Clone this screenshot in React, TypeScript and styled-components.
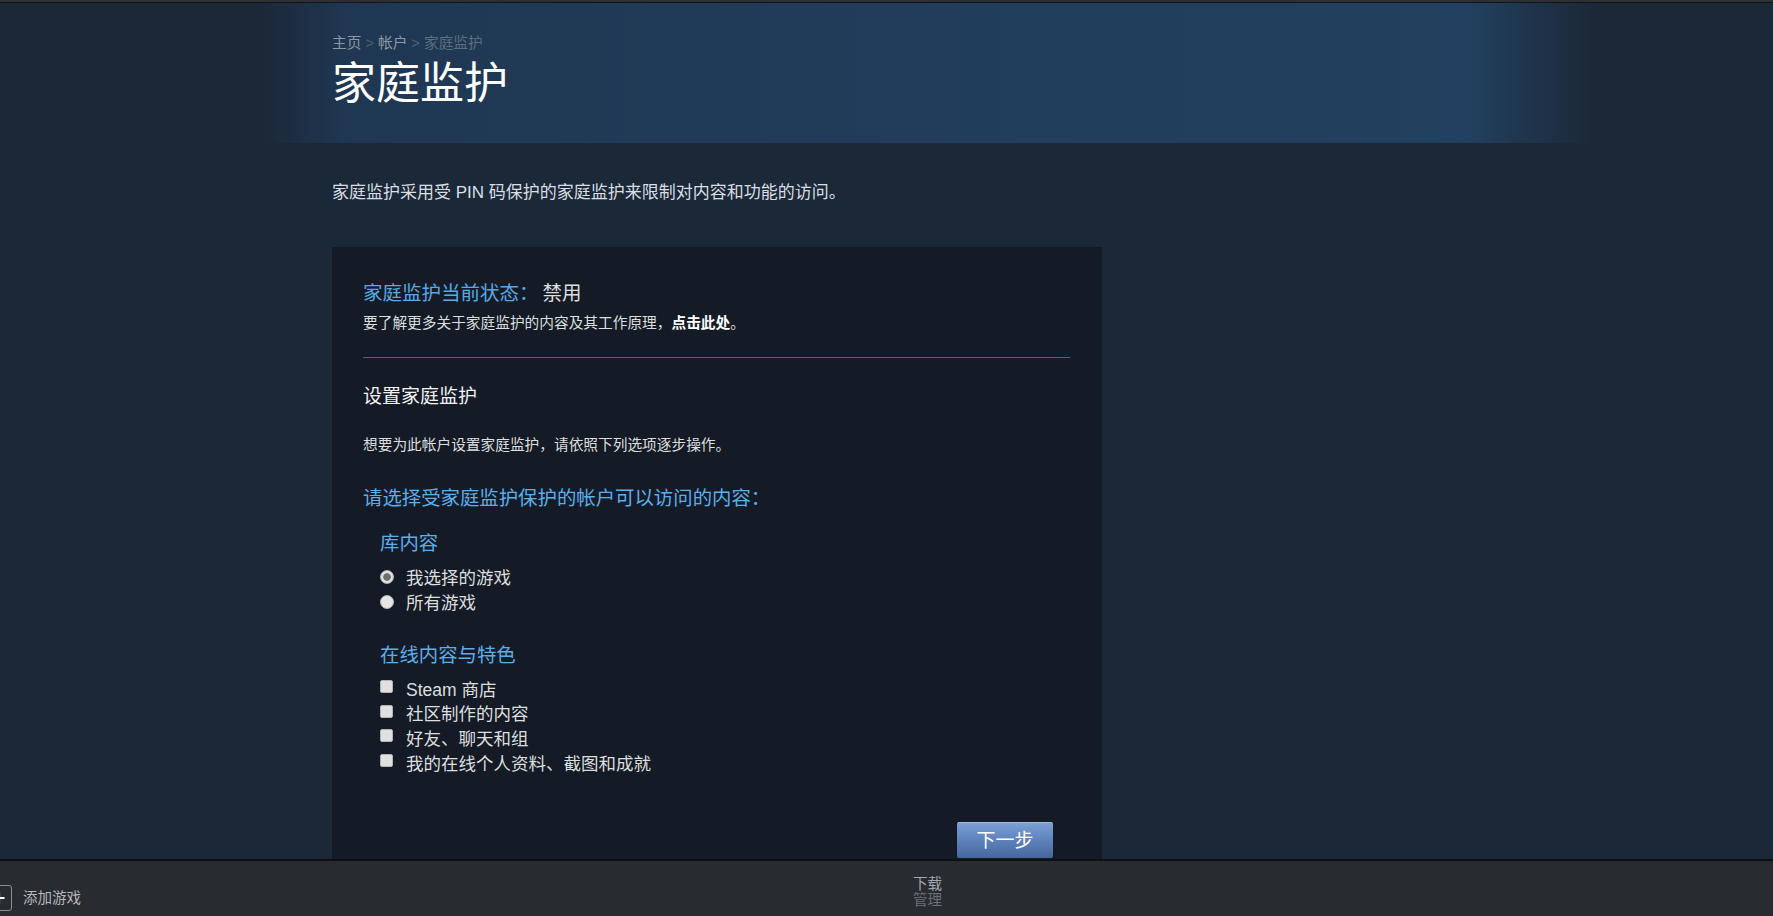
import React from 'react';
import styled, { createGlobalStyle } from 'styled-components';

const GlobalStyle = createGlobalStyle`
  html, body {
    margin: 0;
    padding: 0;
    height: 100%;
    overflow: hidden;
  }
  body {
    background: #1b2838;
    color: #d6dde3;
    font-family: "Liberation Sans", "Noto Sans CJK SC", Arial, sans-serif;
  }
`;

const TopBar = styled.div`
  height: 2px;
  background: #2c2f33;
  border-bottom: 1px solid #131518;
`;

const HeaderBand = styled.header`
  height: 140px;
  box-sizing: border-box;
  padding: 31px 0 0 332px;
  background: linear-gradient(
    90deg,
    rgba(31, 56, 83, 0) 262px,
    #1f3752 345px,
    #213d5b 900px,
    #22405f 1470px,
    rgba(34, 64, 95, 0) 1592px
  );
`;

const Breadcrumbs = styled.div`
  font-size: 14.7px;
  line-height: 18px;
  color: #8f98a0;
`;

const Sep = styled.span`
  color: #56626d;
  margin: 0 4px;
`;

const Current = styled.span`
  color: #5a6f80;
`;

const Title = styled.h1`
  margin: 6px 0 0;
  font-size: 44px;
  line-height: 52px;
  font-weight: 400;
  color: #ffffff;
`;

const Main = styled.main`
  padding-left: 332px;
`;

const Intro = styled.p`
  margin: 38px 0 0;
  font-size: 17px;
  line-height: 24px;
  color: #d8dee3;
`;

const Panel = styled.section`
  margin-top: 42px;
  width: 770px;
  box-sizing: border-box;
  padding: 34px 32px 40px 31px;
  background: #151b26;
`;

const Status = styled.div`
  font-size: 19.5px;
  line-height: 24px;
  color: #57a9e4;
`;

const StatusValue = styled.span`
  color: #dcdedf;
  margin-left: 4px;
`;

const Small = styled.p<{ $top: number }>`
  margin: ${(p) => p.$top}px 0 0;
  font-size: 14.7px;
  line-height: 20px;
  color: #dcdedf;
`;

const Link = styled.a`
  color: #ffffff;
  font-weight: 700;
  text-decoration: none;
  cursor: pointer;
`;

const Divider = styled.hr`
  margin: 24px 0 0;
  border: 0;
  height: 1px;
  background: #3b6a8a;
`;

const SectionTitle = styled.h2`
  margin: 27px 0 0;
  font-size: 19px;
  line-height: 24px;
  font-weight: 400;
  color: #f2f2f2;
`;

const Question = styled.h3`
  margin: 31px 0 0;
  font-size: 19.4px;
  line-height: 24px;
  font-weight: 400;
  color: #5aafea;
`;

const Group = styled.div`
  padding-left: 17px;
`;

const GroupTitle = styled.h4<{ $top: number }>`
  margin: ${(p) => p.$top}px 0 0;
  font-size: 19.4px;
  line-height: 24px;
  font-weight: 400;
  color: #5aafea;
`;

const OptionList = styled.div<{ $top: number }>`
  display: flex;
  flex-direction: column;
  margin-top: ${(p) => p.$top}px;
`;

const Option = styled.label<{ $h: number }>`
  display: flex;
  align-items: center;
  gap: 12px;
  height: ${(p) => p.$h}px;
  font-size: 17.5px;
  color: #dcdedf;
  cursor: pointer;
`;

const Radio = styled.input.attrs({ type: 'radio' })`
  appearance: none;
  margin: 0;
  width: 14px;
  height: 14px;
  border-radius: 50%;
  border: 1px solid #b4b4b4;
  background: #e6e6e6;
  flex-shrink: 0;

  &:checked {
    background: radial-gradient(circle, #6e6e6e 0 3.4px, #e2e2e2 4.2px);
  }
`;

const Checkbox = styled.input.attrs({ type: 'checkbox' })`
  appearance: none;
  margin: -3px 1px 0 0;
  width: 13px;
  height: 13px;
  border-radius: 2px;
  border: 1px solid #b2b2b2;
  background: #e0e0e0;
  flex-shrink: 0;
`;

const Actions = styled.div`
  display: flex;
  justify-content: flex-end;
  margin-top: 48px;
  padding-right: 17px;
`;

const NextButton = styled.button`
  width: 96px;
  height: 36px;
  border: 0;
  border-top: 1px solid #9cbce6;
  border-radius: 2px;
  background: linear-gradient(180deg, #7aa0d6 0%, #5a7fb8 55%, #47679c 100%);
  color: #ffffff;
  font-family: inherit;
  font-size: 19px;
  line-height: 36px;
  padding: 0 0 2px;
  cursor: pointer;
`;

const BottomBar = styled.footer`
  position: fixed;
  left: 0;
  right: 0;
  bottom: 0;
  height: 57px;
  box-sizing: border-box;
  border-top: 2px solid #0f1013;
  background: #282b30;
  display: flex;
  align-items: flex-start;
`;

const AddGame = styled.div`
  display: flex;
  align-items: center;
  gap: 11px;
  width: 927px;
  margin: 24px 0 0 -14px;
  flex-shrink: 0;
  font-size: 14.5px;
  line-height: 26px;
  color: #b4b7bb;
`;

const PlusBox = styled.span`
  width: 26px;
  height: 26px;
  box-sizing: border-box;
  border: 1.5px solid #8b8e93;
  border-radius: 3px;
  display: flex;
  align-items: center;
  justify-content: center;
`;

const Downloads = styled.div`
  margin-top: 15px;
  display: flex;
  flex-direction: column;
  font-size: 14.5px;
  line-height: 16px;
`;

const DownloadLine = styled.span<{ $dim?: boolean }>`
  color: ${(p) => (p.$dim ? '#6b6e73' : '#a3a6ab')};
`;

const libraryOptions = [
  { label: '我选择的游戏', checked: true },
  { label: '所有游戏', checked: false },
];

const onlineOptions = [
  'Steam 商店',
  '社区制作的内容',
  '好友、聊天和组',
  '我的在线个人资料、截图和成就',
];

export default function App() {
  return (
    <>
      <GlobalStyle />
      <TopBar />
      <HeaderBand>
        <Breadcrumbs>
          主页<Sep>&gt;</Sep>帐户<Sep>&gt;</Sep>
          <Current>家庭监护</Current>
        </Breadcrumbs>
        <Title>家庭监护</Title>
      </HeaderBand>
      <Main>
        <Intro>家庭监护采用受 PIN 码保护的家庭监护来限制对内容和功能的访问。</Intro>
        <Panel>
          <Status>
            家庭监护当前状态：<StatusValue>禁用</StatusValue>
          </Status>
          <Small $top={8}>
            要了解更多关于家庭监护的内容及其工作原理，<Link>点击此处</Link>。
          </Small>
          <Divider />
          <SectionTitle>设置家庭监护</SectionTitle>
          <Small $top={26}>想要为此帐户设置家庭监护，请依照下列选项逐步操作。</Small>
          <Question>请选择受家庭监护保护的帐户可以访问的内容：</Question>
          <Group>
            <GroupTitle $top={21}>库内容</GroupTitle>
            <OptionList $top={9}>
              {libraryOptions.map((o) => (
                <Option key={o.label} $h={25}>
                  <Radio name="library" defaultChecked={o.checked} />
                  {o.label}
                </Option>
              ))}
            </OptionList>
            <GroupTitle $top={29}>在线内容与特色</GroupTitle>
            <OptionList $top={9}>
              {onlineOptions.map((label) => (
                <Option key={label} $h={24.6}>
                  <Checkbox />
                  {label}
                </Option>
              ))}
            </OptionList>
          </Group>
          <Actions>
            <NextButton>下一步</NextButton>
          </Actions>
        </Panel>
      </Main>
      <BottomBar>
        <AddGame>
          <PlusBox>
            <svg width="14" height="14" viewBox="0 0 14 14">
              <path d="M7 1.5v11M1.5 7h11" stroke="#ffffff" strokeWidth="2.2" />
            </svg>
          </PlusBox>
          添加游戏
        </AddGame>
        <Downloads>
          <DownloadLine>下载</DownloadLine>
          <DownloadLine $dim>管理</DownloadLine>
        </Downloads>
      </BottomBar>
    </>
  );
}
